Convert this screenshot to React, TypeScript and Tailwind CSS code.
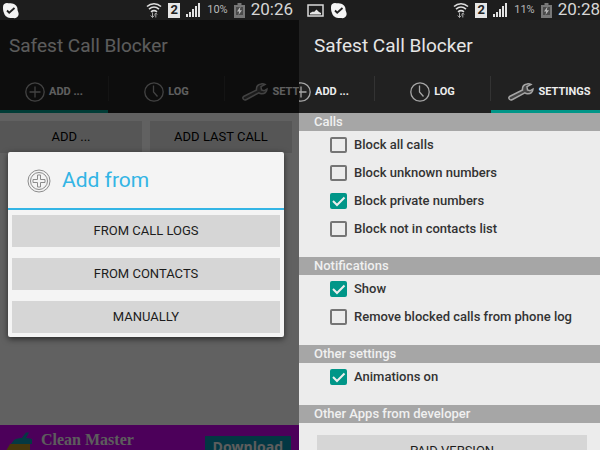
import type { ReactNode } from 'react';

function SkypeIcon() {
    return (
        <svg width="17" height="17" viewBox="0 0 17 17">
            <path d="M1 5C1 2 3 1 5 1c2 .5 3 0 5 .5 3.500.5 6 3.500 5.500 6.500.5 2 1.500 3 1 5-.5 2.500-3 3.500-5.500 3C7 16.500 3 15 2 11 1 9 1 7 1 5z" fill="#f4f4f4" />
            <path d="M5 8.500l2.200 2.200L12.500 6" fill="none" stroke="#222" strokeWidth="1.800" />
        </svg>
    );
}

function PictureIcon() {
    return (
        <svg width="17" height="13" viewBox="0 0 17 13">
            <rect x="1" y="1" width="15" height="11" fill="none" stroke="#d8d8d8" strokeWidth="1.500" />
            <path d="M3 10.500V9l3-1.500 1 .5 2.500-2.500L12 8l2 1v1.500z" fill="#e4e4e4" />
        </svg>
    );
}

function WifiIcon() {
    return (
        <svg width="16" height="16" viewBox="0 0 16 16" fill="none" stroke="#dedede" strokeWidth="1.600">
            <path d="M1 4.500C5 .8 11 .8 15 4.500" />
            <path d="M3 7.200C6 4.600 10 4.600 13 7.200" />
            <path d="M5 9.800c2-1.600 4-1.600 6 0" />
            <path d="M6.500 10.500v5M4.700 13.500l1.800 2 1.800-2M9.800 15.500v-4M8.500 12.500l1.300-1.500 1.300 1.500" stroke="#aaa" strokeWidth="1" />
        </svg>
    );
}

function SignalIcon() {
    return (
        <svg width="15" height="14" viewBox="0 0 15 14" fill="#e2e2e2">
            <rect x="0" y="11" width="2" height="3" />
            <rect x="3" y="9" width="2" height="5" />
            <rect x="6" y="6" width="2" height="8" />
            <rect x="9" y="3" width="2" height="11" />
            <rect x="12" y="0" width="2" height="14" />
        </svg>
    );
}

function BatteryIcon() {
    return (
        <svg width="11" height="15" viewBox="0 0 11 15">
            <path d="M3.500 0h4v2H11v13H0V2h3.500z" fill="#777" />
            <path d="M2 4h7v8H2z" fill="#4a4a4a" />
            <path d="M6.500 3.500L3 8.500h2.200L4.500 12 8 7.300H5.800z" fill="#b8b8b8" />
        </svg>
    );
}

function PlusIcon() {
    return (
        <svg width="20" height="20" viewBox="0 0 20 20" fill="none" stroke="#a6a6a6" className="shrink-0">
            <circle cx="10" cy="10" r="9.200" strokeWidth="1.300" />
            <path d="M10 4.500v11M4.500 10h11" strokeWidth="1.300" />
        </svg>
    );
}

function ClockIcon() {
    return (
        <svg width="20" height="20" viewBox="0 0 20 20" fill="none" stroke="#a6a6a6" className="shrink-0">
            <circle cx="10" cy="10" r="9.200" strokeWidth="1.300" />
            <path d="M9.500 3.500V10l4 4.500" strokeWidth="1.300" />
        </svg>
    );
}

function WrenchIcon() {
    return (
        <svg width="26" height="18" viewBox="0 0 26 18" className="shrink-0">
            <path
                d="M1.500 13.500L14.500 7c-.3-3 1.500-5.500 4.500-6 1.500-.3 3 0 4 .5l-4 2.200.5 3.300 2.500.8L25 6c0 3-2.500 5-5.500 4.800-1.200 0-2-.4-2.700-1L4.500 16.500C1.500 18 0 15 1.500 13.500z"
                fill="#444"
                stroke="#a6a6a6"
                strokeWidth="1.500"
            />
        </svg>
    );
}

function DialogPlusIcon() {
    return (
        <svg width="24" height="24" viewBox="0 0 24 24" fill="none" stroke="#8c8c8c">
            <circle cx="12" cy="12" r="11" />
            <circle cx="12" cy="12" r="8.500" />
            <path d="M10.500 6h3v4.500H18v3h-4.500V18h-3v-4.500H6v-3h4.500z" />
        </svg>
    );
}

function BroomIcon() {
    return (
        <svg width="28" height="20" viewBox="0 0 28 20" className="shrink-0">
            <path d="M15 8l5-6.500h3L19.500 8z" fill="#0a90a8" />
            <path d="M8 9c3-2.500 13-2.500 18-1v5H5z" fill="#0a90a8" />
            <path d="M4 13h20v7H0z" fill="#b08a20" />
        </svg>
    );
}

function StatusBar({ time, battery, picture }: { time: string; battery: string; picture?: boolean }) {
    return (
        <div className={`flex h-5 shrink-0 items-center bg-[#1d1d1d] ${picture ? 'pl-2' : 'pl-0.5 pr-1.5'}`}>
            <div className="flex grow items-center gap-1.5">
                {picture && <PictureIcon />}
                <SkypeIcon />
            </div>
            <div className="flex items-center gap-1.5">
                <WifiIcon />
                <div className="flex h-[15px] w-3 items-center justify-center bg-[#e6e6e6] text-[13px] font-bold text-[#222]">2</div>
                <SignalIcon />
                <div className="text-[11px] text-[#b8b8b8]">{battery}</div>
                <BatteryIcon />
                <div className="text-[17px] text-[#d6d6d6]">{time}</div>
            </div>
        </div>
    );
}

function Tab({ icon, label, width, active }: { icon: ReactNode; label: string; width: string; active?: boolean }) {
    return (
        <button
            className={`flex shrink-0 items-center justify-center border-b-[3px] pt-1 ${width} ${active ? 'border-[#009688]' : 'border-transparent'}`}
        >
            {icon}
            <span className="pl-1 text-[11px] font-bold text-[#ededed]">{label}</span>
        </button>
    );
}

function Header({ active, scrolled }: { active: string; scrolled?: boolean }) {
    return (
        <header className="shrink-0 overflow-hidden bg-[#212121]">
            <h1 className={`flex h-[50px] items-center pt-0.5 text-[19px] text-[#e6e6e6] ${scrolled ? 'pl-[15px]' : 'pl-[9px]'}`}>
                Safest Call Blocker
            </h1>
            <nav className={`flex h-[43px] ${scrolled ? '-ml-[33px]' : ''}`}>
                <Tab icon={<PlusIcon />} label="ADD ..." width="w-[108px]" active={active === 'add'} />
                <div className="mb-3 mt-1.5 w-px shrink-0 bg-[#333]" />
                <Tab icon={<ClockIcon />} label="LOG" width="w-[115px]" active={active === 'log'} />
                <div className="mb-3 mt-1.5 w-px shrink-0 bg-[#333]" />
                <Tab icon={<WrenchIcon />} label="SETTINGS" width="w-[117px]" active={active === 'settings'} />
            </nav>
        </header>
    );
}

function AddDialog() {
    return (
        <div role="dialog" aria-label="Add from" className="absolute left-2 right-[15px] top-[152px] rounded-xs bg-[#f4f4f4] shadow-[0_2px_6px_rgba(0,0,0,0.6)]">
            <div className="flex h-[58px] items-center gap-[11px] border-b-2 border-[#33b5e5] pl-[19px] pt-0.5">
                <DialogPlusIcon />
                <h2 className="text-[21px] text-[#33b5e5]">Add from</h2>
            </div>
            <div className="flex flex-col gap-[11px] px-1 pb-1 pt-[5px]">
                <button className="h-8 bg-[#d6d6d6] text-[13px] text-[#1c1c1c]">FROM CALL LOGS</button>
                <button className="h-8 bg-[#d6d6d6] text-[13px] text-[#1c1c1c]">FROM CONTACTS</button>
                <button className="h-8 bg-[#d6d6d6] text-[13px] text-[#1c1c1c]">MANUALLY</button>
            </div>
        </div>
    );
}

function AddScreen() {
    return (
        <div className="relative flex min-w-0 flex-col overflow-hidden">
            <StatusBar time="20:26" battery="10%" />
            <div className="relative flex grow flex-col">
                <Header active="add" />
                <main className="flex grow flex-col bg-[#f2f2f2]">
                    <div className="flex grow items-start gap-2 pr-[7px] pt-2">
                        <button className="h-8 flex-1 bg-[#d8d8d8] text-[13px]">ADD ...</button>
                        <button className="h-8 flex-1 bg-[#d8d8d8] text-[13px]">ADD LAST CALL</button>
                    </div>
                    <div className="flex h-[25px] overflow-hidden bg-[#be00e0] pl-1.5 pr-2">
                        <div className="pt-1.5">
                            <BroomIcon />
                        </div>
                        <div className="grow pl-[7px] pt-1.5 font-['Liberation_Serif'] text-base font-bold leading-[18px] text-[#e8e8e8]">
                            Clean Master
                        </div>
                        <a href="#download" className="mt-[11px] h-8 bg-[#088ba8] px-2 font-['Open_Sans'] text-sm font-bold leading-[22px] text-[#e8e8e8]">
                            Download
                        </a>
                    </div>
                </main>
                <div className="absolute inset-0 bg-black/60" />
            </div>
            <AddDialog />
        </div>
    );
}

function Option({ label, checked }: { label: string; checked?: boolean }) {
    return (
        <label className="flex h-7 items-center gap-[7px] pl-[31px] text-[13px] font-medium text-[#333]">
            <span className="relative flex">
                <input
                    type="checkbox"
                    defaultChecked={checked}
                    className="peer h-4 w-[17px] appearance-none rounded-xs border-2 border-[#757575] checked:border-[#009688] checked:bg-[#009688]"
                />
                <svg viewBox="0 0 17 16" className="pointer-events-none absolute inset-0 hidden peer-checked:block" fill="none" stroke="#eee" strokeWidth="2">
                    <path d="M3 8l4 4 7.500-7.500" />
                </svg>
            </span>
            {label}
        </label>
    );
}

function Section({ title, children }: { title: string; children: ReactNode }) {
    return (
        <section className="pb-3.5">
            <h2 className="flex h-[18px] items-center bg-[#a6a6a6] pl-[15px] text-[13px] font-medium text-[#f0f0f0]">{title}</h2>
            {children}
        </section>
    );
}

function SettingsScreen() {
    return (
        <div className="flex min-w-0 flex-col overflow-hidden">
            <StatusBar time="20:28" battery="11%" picture />
            <Header active="settings" scrolled />
            <main className="grow bg-[#ececec]">
                <Section title="Calls">
                    <Option label="Block all calls" />
                    <Option label="Block unknown numbers" />
                    <Option label="Block private numbers" checked />
                    <Option label="Block not in contacts list" />
                </Section>
                <Section title="Notifications">
                    <Option label="Show" checked />
                    <Option label="Remove blocked calls from phone log" />
                </Section>
                <Section title="Other settings">
                    <Option label="Animations on" checked />
                </Section>
                <Section title="Other Apps from developer">
                    <div className="flex pl-[18px] pr-[13px] pt-3">
                        <button className="h-8 grow bg-[#d6d6d6] text-[13px] text-[#1c1c1c]">PAID VERSION</button>
                    </div>
                </Section>
            </main>
        </div>
    );
}

function App() {
    return (
        <div className="grid h-screen grid-cols-[299fr_301fr] grid-rows-[100%] overflow-hidden font-[Roboto,sans-serif]">
            <AddScreen />
            <SettingsScreen />
        </div>
    );
}

export default App;
